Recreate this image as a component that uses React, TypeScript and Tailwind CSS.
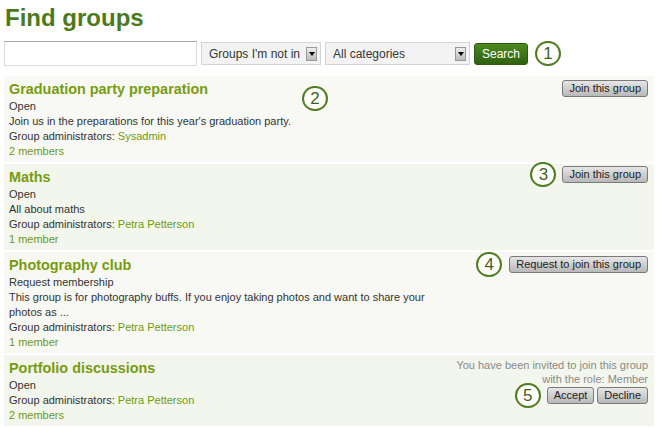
import React from "react";

const font = { fontFamily: '"Liberation Sans", Arial, sans-serif' };

function Circle({ n }: { n: number }) {
  return (
    <div className="w-[26px] h-[25px] rounded-full border-2 border-[#4f7d1f] bg-white flex items-center justify-center text-[17px] leading-none text-[#3f5f22] font-light shrink-0">
      {n}
    </div>
  );
}

function GrayButton({ children }: { children: React.ReactNode }) {
  return (
    <div className="h-[17px] px-[6px] flex items-center rounded-[3px] border border-[#7a7a7a] bg-gradient-to-b from-[#e6e6e6] to-[#b9b9b9] text-[11px] text-[#222] leading-none whitespace-nowrap">
      {children}
    </div>
  );
}

function Select({ label, width }: { label: string; width: string }) {
  return (
    <div
      className={`${width} h-[23px] border border-[#d4d4d4] bg-[#f3f3f3] flex items-center justify-between pl-[7px] pr-[3px] text-[12px] text-[#333]`}
    >
      <span>{label}</span>
      <div className="w-[11px] h-[14px] bg-gradient-to-b from-[#eee] to-[#bbb] border border-[#999] flex items-center justify-center">
        <div className="w-0 h-0 border-l-[3px] border-r-[3px] border-t-[4px] border-l-transparent border-r-transparent border-t-black" />
      </div>
    </div>
  );
}

type Row = {
  title: string;
  status: string;
  desc?: string[];
  admin: string;
  members: string;
  bg: string;
  right: React.ReactNode;
  overlay?: React.ReactNode;
};

export default function App() {
  const rows: Row[] = [
    {
      title: "Graduation party preparation",
      status: "Open",
      desc: ["Join us in the preparations for this year's graduation party."],
      admin: "Sysadmin",
      members: "2 members",
      bg: "bg-[#f8f9f4]",
      right: (
        <div className="pt-[1px]">
          <GrayButton>Join this group</GrayButton>
        </div>
      ),
      overlay: (
        <div className="absolute left-[298px] top-[10px]">
          <Circle n={2} />
        </div>
      ),
    },
    {
      title: "Maths",
      status: "Open",
      desc: ["All about maths"],
      admin: "Petra Petterson",
      members: "1 member",
      bg: "bg-[#f2f6ec]",
      right: (
        <div className="flex items-center gap-[6px] -mt-[5px]">
          <Circle n={3} />
          <GrayButton>Join this group</GrayButton>
        </div>
      ),
    },
    {
      title: "Photography club",
      status: "Request membership",
      desc: [
        "This group is for photography buffs. If you enjoy taking photos and want to share your",
        "photos as ...",
      ],
      admin: "Petra Petterson",
      members: "1 member",
      bg: "bg-[#f8f9f4]",
      right: (
        <div className="flex items-center gap-[7px] -mt-[3px]">
          <Circle n={4} />
          <GrayButton>Request to join this group</GrayButton>
        </div>
      ),
    },
    {
      title: "Portfolio discussions",
      status: "Open",
      admin: "Petra Petterson",
      members: "2 members",
      bg: "bg-[#f2f6ec]",
      right: (
        <div className="flex flex-col items-end">
          <div className="text-[11px] leading-[14px] text-[#8a8a8a] text-right">
            You have been invited to join this group
            <br />
            with the role: Member
          </div>
          <div className="flex items-center gap-[6px] h-[17px] mt-[1px]">
            <Circle n={5} />
            <div className="flex gap-[3px]">
              <GrayButton>Accept</GrayButton>
              <GrayButton>Decline</GrayButton>
            </div>
          </div>
        </div>
      ),
    },
  ];

  return (
    <div style={font} className="w-[658px] h-[427px] bg-white overflow-hidden">
      <h1 className="pl-[5px] pt-[1px] text-[24px] font-bold leading-[34px] text-[#4c7a1b]">
        Find groups
      </h1>
      <div className="flex items-center gap-[4px] pl-[4px] mt-[6px]">
        <div className="w-[193px] h-[25px] border border-[#dadada] border-t-[#a9a9a9] bg-white" />
        <Select label="Groups I'm not in" width="w-[120px]" />
        <Select label="All categories" width="w-[145px]" />
        <div className="h-[22px] px-[7px] flex items-center rounded-[3px] border border-[#2e5a10] bg-gradient-to-b from-[#4d8a1f] to-[#2f6010] text-white text-[12px]">
          Search
        </div>
        <div className="ml-[3px]">
          <Circle n={1} />
        </div>
      </div>
      <div className="mt-[10px] mx-[4px] flex flex-col gap-[2px]">
        {rows.map((r, i) => (
          <div
            key={i}
            className={`relative ${r.bg} flex justify-between pl-[5px] pr-[6px] pt-[3px] pb-[3px]`}
          >
            <div className="flex flex-col">
              <div className="text-[14.4px] font-bold leading-[20px] text-[#779c0e]">{r.title}</div>
              <div className="text-[11px] leading-[15px] text-[#333]">
                <div>{r.status}</div>
                {r.desc && r.desc.map((d, j) => <div key={j}>{d}</div>)}
                <div>
                  Group administrators: <span className="text-[#6f9a14]">{r.admin}</span>
                </div>
                <div className="text-[#6f9a14]">{r.members}</div>
              </div>
            </div>
            <div>{r.right}</div>
            {r.overlay}
          </div>
        ))}
      </div>
    </div>
  );
}
